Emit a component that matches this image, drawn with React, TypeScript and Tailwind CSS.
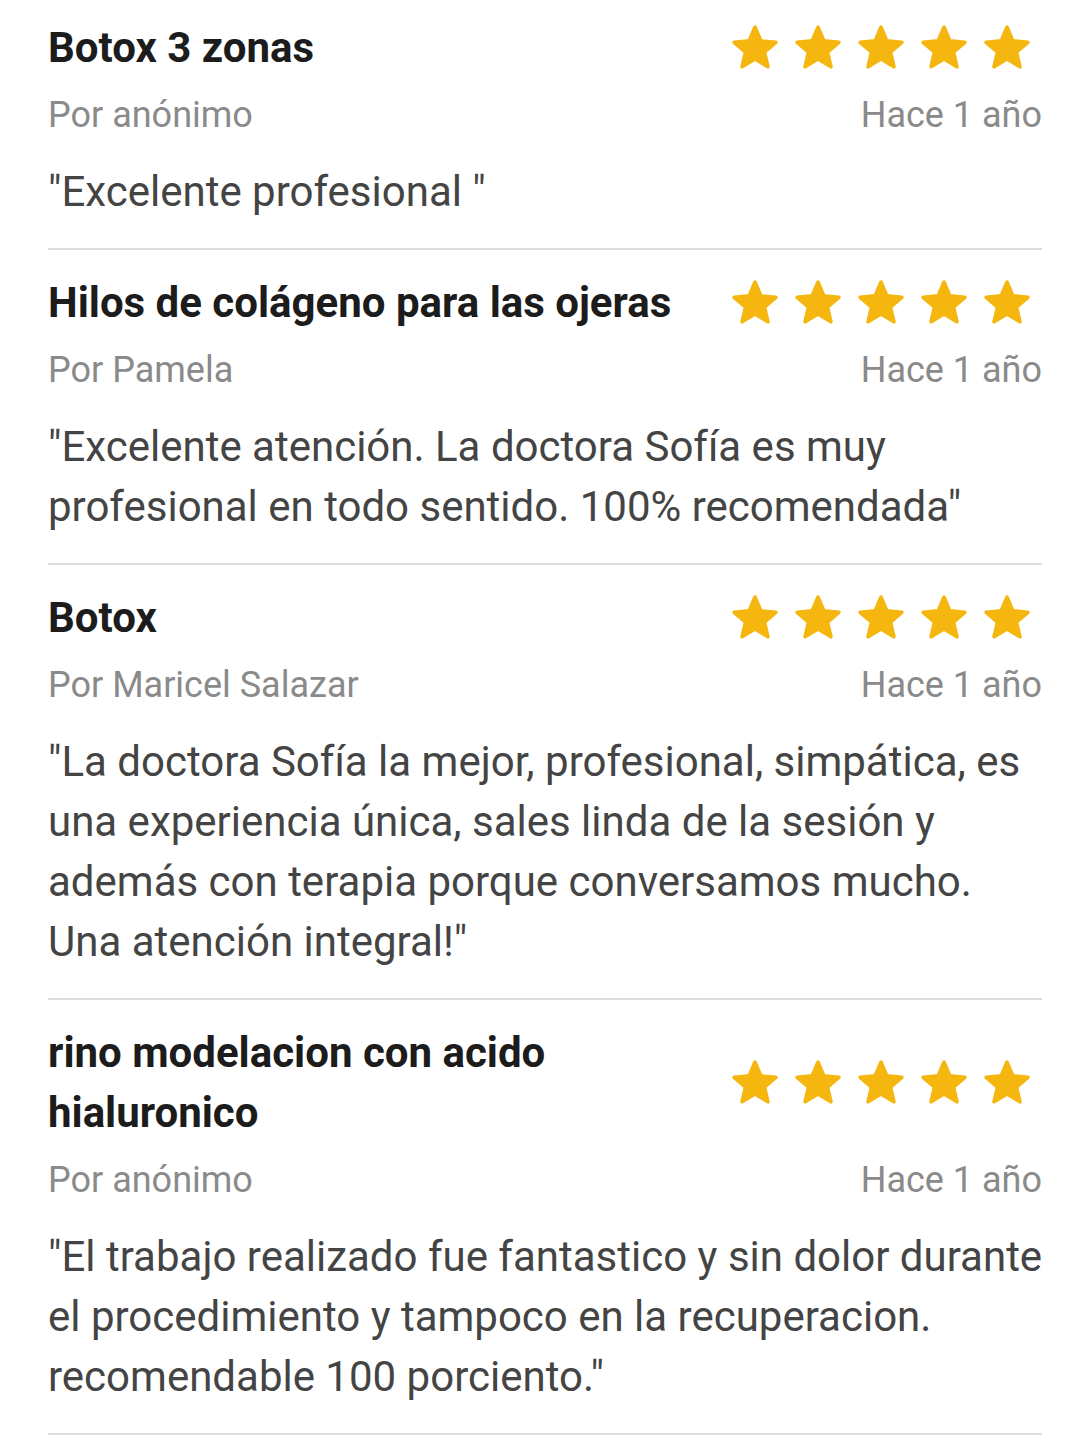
import React from 'react';

type Review = {
  title: string;
  author: string;
  when: string;
  text: string;
};

const REVIEWS: Review[] = [
  {
    title: 'Botox 3 zonas',
    author: 'Por anónimo',
    when: 'Hace 1 año',
    text: '"Excelente profesional "',
  },
  {
    title: 'Hilos de colágeno para las ojeras',
    author: 'Por Pamela',
    when: 'Hace 1 año',
    text: '"Excelente atención. La doctora Sofía es muy profesional en todo sentido. 100% recomendada"',
  },
  {
    title: 'Botox',
    author: 'Por Maricel Salazar',
    when: 'Hace 1 año',
    text: '"La doctora Sofía la mejor, profesional, simpática, es una experiencia única, sales linda de la sesión y además con terapia porque conversamos mucho. Una atención integral!"',
  },
  {
    title: 'rino modelacion con acido hialuronico',
    author: 'Por anónimo',
    when: 'Hace 1 año',
    text: '"El trabajo realizado fue fantastico y sin dolor durante el procedimiento y tampoco en la recuperacion. recomendable 100 porciento."',
  },
];

function Star() {
  return (
    <svg viewBox="0 0 24 24" className="h-[50px] w-[50px]">
      <path
        d="M12 17.27L18.18 21l-1.64-7.03L22 9.24l-7.19-.61L12 2 9.19 8.63 2 9.24l5.46 4.73L5.82 21z"
        fill="#f5b70f"
        stroke="#f5b70f"
        strokeWidth="1.8"
        strokeLinejoin="round"
      />
    </svg>
  );
}

function Stars() {
  return (
    <div className="mr-[10px] flex shrink-0 items-center gap-[13px]">
      {[0, 1, 2, 3, 4].map(i => (
        <Star key={i} />
      ))}
    </div>
  );
}

function ReviewCard({ review, first }: { review: Review; first: boolean }) {
  return (
    <div className={first ? 'pt-[18px]' : 'pt-[23px]'}>
      <div className="flex items-center justify-between gap-[40px]">
        <h2 className="min-w-0 max-w-[640px] flex-1 text-[42px] font-bold leading-[60px] text-[#1c1c1c]">
          {review.title}
        </h2>
        <Stars />
      </div>
      <div className="mt-[15px] flex items-center justify-between text-[36px] leading-[44px] text-[#8a8a8a]">
        <span>{review.author}</span>
        <span>{review.when}</span>
      </div>
      <p className="mt-[25px] mr-[-8px] text-[42px] leading-[60px] text-[#444444]">
        {review.text}
      </p>
      <div className="mt-[26px] h-[2px] bg-[#dcdcdc]" />
    </div>
  );
}

export default function App() {
  return (
    <div
      className="min-h-screen bg-white pl-[48px] pr-[37px]"
      style={{ fontFamily: 'Roboto, "Noto Sans", sans-serif' }}
    >
      {REVIEWS.map((r, i) => (
        <ReviewCard key={r.title} review={r} first={i === 0} />
      ))}
    </div>
  );
}
